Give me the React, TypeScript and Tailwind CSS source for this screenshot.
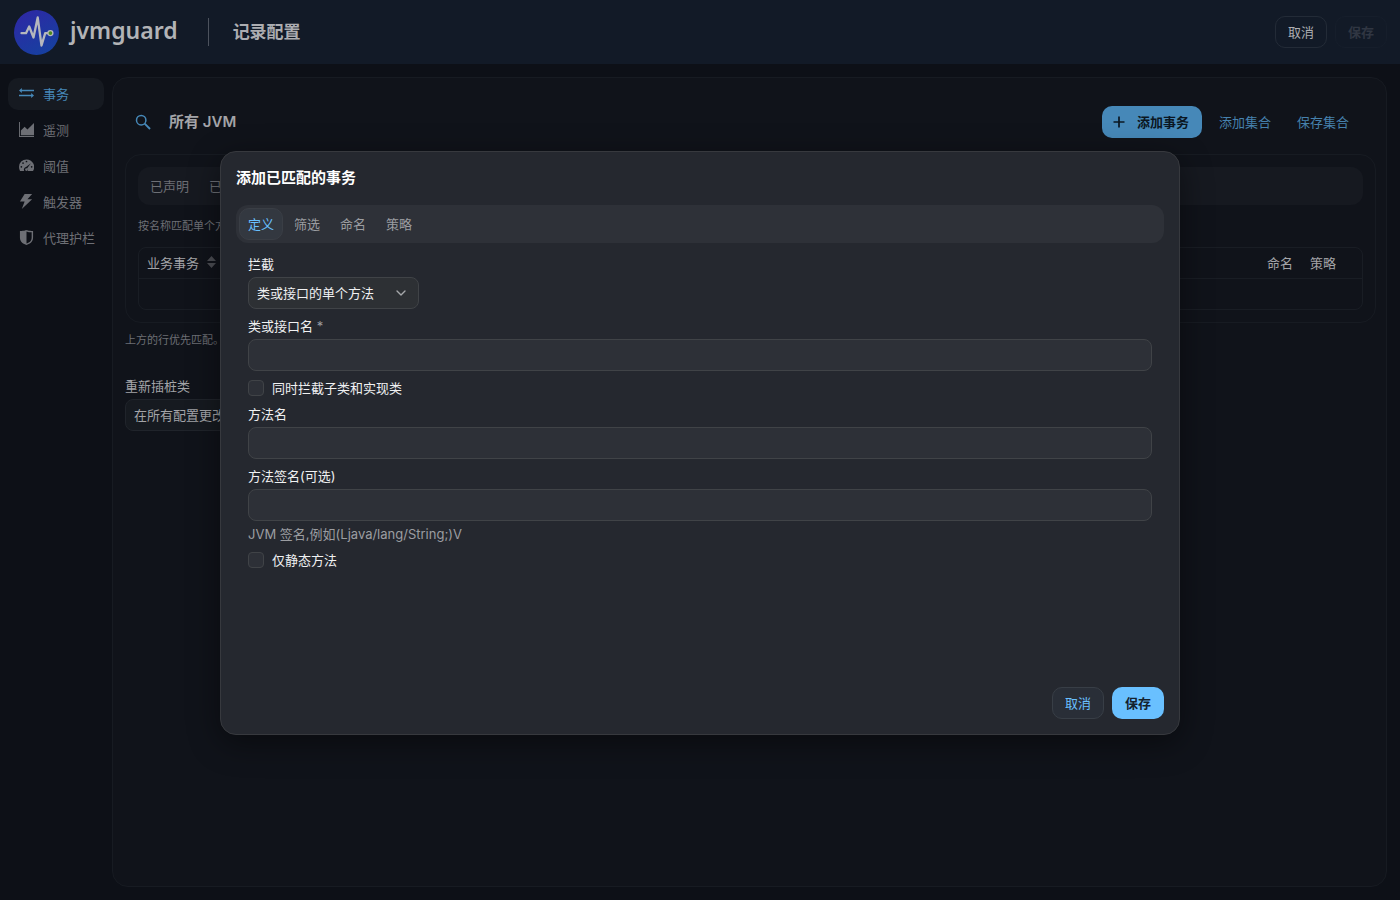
import React from "react";
import { LuChevronDown } from "react-icons/lu";

const font = "font-['Inter','Noto_Sans_CJK_SC',sans-serif]";

const navItems = [
  {
    label: "事务",
    icon: (
      <path d="M3 4V2L0 4.700 3 7.400V5.500h13V4zM13 9.300H0v1.600h13v1.900l3-2.700-3-2.700z" />
    ),
  },
  { label: "遥测", icon: <path d="M1 15V0H0v16h16v-1zM2 14V9l4-4 3 3 7-7v13z" /> },
  {
    label: "阈值",
    icon: (
      <path
        fillRule="evenodd"
        d="M8 1.500a8 8 0 0 0-8 8c0 1.600.400 3 1.100 4.300h4.400a3 3 0 0 1 2-4.200l5.200-4-4 5.200c1 .700 1.300 1.900.700 3h5.500A8 8 0 0 0 8 1.500zM2.500 10.300a.9.9 0 1 1 0-1.800.9.9 0 0 1 0 1.800zM4.300 6.300a.9.9 0 1 1 0-1.800.9.9 0 0 1 0 1.800zM8 4.600a.9.9 0 1 1 0-1.800.9.9 0 0 1 0 1.800zM13.500 10.300a.9.9 0 1 1 0-1.800.9.9 0 0 1 0 1.800zM8 10.800a1.500 1.500 0 1 0 0 3 1.500 1.500 0 0 0 0-3z"
      />
    ),
  },
  { label: "触发器", icon: <path d="M6 0 1 8h5l-3 8L14 5.500H9L14 0z" /> },
  {
    label: "代理护栏",
    icon: (
      <path
        fillRule="evenodd"
        d="M8 0S6 1 1 1v7c0 5 4 7 7 8 3-1 7-3 7-8V1C10 1 8 0 8 0zm0 14.500V1.500c1.500.600 3.500.900 5.500 1V8c0 4-3 5.700-5.500 6.500z"
      />
    ),
  },
];

function Logo() {
  return (
    <svg viewBox="0 0 46 46" className="size-[46px] shrink-0" aria-hidden="true">
      <defs>
        <linearGradient id="disc" x1="0" y1="0" x2="0.6" y2="1">
          <stop offset="0" stopColor="#3026a5" />
          <stop offset="1" stopColor="#173fa0" />
        </linearGradient>
      </defs>
      <circle cx="22.5" cy="23.5" r="22.5" fill="url(#disc)" />
      <path
        d="M7.500 24.200H12L15.200 17.500l4.300 11L23.700 8.500l3.800 28 3.700-12.300h3"
        fill="none"
        stroke="#b5b7bd"
        strokeWidth="2.3"
        strokeLinejoin="round"
        strokeLinecap="round"
      />
      <circle cx="36.400" cy="24.100" r="2.500" fill="#4a8a1e" stroke="#b5b7bd" strokeWidth="1.300" />
    </svg>
  );
}

const labelClass = "h-6 leading-[22px]";
const inputClass = "h-8 w-full rounded-lg border border-[#404347] bg-[#2d3037] px-2 outline-none";

function Field({ id, label, hint, required }: { id: string; label: string; hint?: string; required?: boolean }) {
  return (
    <div className="flex flex-col">
      <label htmlFor={id} className={labelClass}>
        {label}
        {required && <span className="text-[#9b9da1]"> *</span>}
      </label>
      <input id={id} type="text" required={required} className={inputClass} />
      {hint && <p className="h-[22px] leading-[26px] text-[#9b9da1]">{hint}</p>}
    </div>
  );
}

function Check({ id, label }: { id: string; label: string }) {
  return (
    <div className="flex h-5 items-center gap-2 pt-[2px]">
      <input id={id} type="checkbox" className="size-4 appearance-none rounded border border-[#404347] bg-[#2d3037] checked:bg-[#69c0ff]" />
      <label htmlFor={id}>{label}</label>
    </div>
  );
}

function Dialog() {
  return (
    <div role="dialog" aria-modal="true" aria-labelledby="dialog-title" className="flex min-h-[584px] w-full max-w-[960px] flex-col rounded-2xl border border-[#37393e] bg-[#25282f] p-[15px] text-[#f0f1f2] shadow-[0_8px_32px_rgba(0,0,0,0.45)]">
      <h2 id="dialog-title" className="text-[15px] leading-[22px] font-semibold text-white">添加已匹配的事务</h2>
      <div role="tablist" className="mt-4 flex h-[38px] shrink-0 items-center gap-[2px] rounded-xl bg-[#2e3138] px-[3px]">
        <button role="tab" aria-selected="true" className="h-8 rounded-[10px] border border-[#3a3e45] bg-[#333840] px-2 text-[#69c0ff]">定义</button>
        {["筛选", "命名", "策略"].map((t) => (
          <button key={t} role="tab" aria-selected="false" className="h-8 px-[9px] text-[#9b9da1]">{t}</button>
        ))}
      </div>
      <div className="flex flex-col gap-[6px] px-3 pt-[10px]">
        <div className="flex flex-col items-start">
          <label htmlFor="intercept" className={labelClass}>拦截</label>
          <div className="relative">
            <select id="intercept" className="h-8 w-[171px] appearance-none rounded-lg border border-[#404347] bg-[#2d3034] pr-8 pl-2 outline-none">
              <option>类或接口的单个方法</option>
            </select>
            <LuChevronDown className="pointer-events-none absolute top-2 right-[10px] size-4 text-[#a6a8ab]" />
          </div>
        </div>
        <Field id="class-name" label="类或接口名" required />
        <Check id="subclasses" label="同时拦截子类和实现类" />
        <Field id="method-name" label="方法名" />
        <Field id="signature" label="方法签名(可选)" hint="JVM 签名,例如(Ljava/lang/String;)V" />
        <Check id="static-only" label="仅静态方法" />
      </div>
      <div className="mt-auto flex justify-end gap-2">
        <button className="h-8 rounded-[10px] border border-[#383e46] bg-[#292e37] px-3 text-[#69c0ff]">取消</button>
        <button className="h-8 rounded-[10px] bg-[#69c0ff] px-[13px] font-semibold text-[#14222e]">保存</button>
      </div>
    </div>
  );
}

export default function App() {
  return (
    <div className={`${font} relative flex min-h-screen flex-col bg-[#0d1017] text-[13px] leading-5 text-[#a3a4a8]`}>
      <header className="flex h-16 items-center bg-[#121a27] pr-[13px] pl-[14px]">
        <Logo />
        <span className="ml-[10px] pb-1 font-['Noto_Sans',sans-serif] text-[23px] leading-8 font-semibold text-[#b2b3b6]">jvmguard</span>
        <span className="mr-6 ml-[30px] h-7 w-px bg-[#4c525d]" />
        <h1 className="text-[17px] font-semibold text-[#acadb1]">记录配置</h1>
        <div className="ml-auto flex gap-2">
          <button className="h-8 rounded-[10px] border border-[#232b37] px-3 text-[#acadb1]">取消</button>
          <button disabled className="h-8 rounded-[10px] border border-[#161e2b] px-3 font-semibold text-[#303642]">保存</button>
        </div>
      </header>
      <div className="flex flex-1 pr-[13px] pb-[13px]">
        <nav className="flex w-28 shrink-0 flex-col gap-1 px-2 pt-[14px]">
          {navItems.map((n, i) => (
            <a key={n.label} href="#" className={i === 0 ? "flex h-8 items-center gap-[9px] rounded-[10px] bg-[#161a21] pl-[11px] whitespace-nowrap text-[#4688b8]" : "flex h-8 items-center gap-[9px] pl-[11px] whitespace-nowrap text-[#6d6f75]"}>
              <svg viewBox="0 0 16 16" className="mb-px size-[15px] shrink-0 fill-current" aria-hidden="true">{n.icon}</svg>
              {n.label}
            </a>
          ))}
        </nav>
        <main className="mt-[13px] min-w-0 flex-1 rounded-2xl border border-[#171b22] bg-[#10131a] px-3">
          <div className="mt-7 flex h-8 items-center pr-[9px] pl-[10px]">
            <svg viewBox="0 0 16 16" className="size-4 text-[#4688b8]" aria-hidden="true">
              <circle cx="6.200" cy="6.200" r="4.700" fill="none" stroke="currentColor" strokeWidth="1.500" />
              <path d="m9.700 9.700 5.300 5.300" stroke="currentColor" strokeWidth="1.900" />
            </svg>
            <h2 className="ml-[18px] text-[15px] font-semibold">所有 JVM</h2>
            <button className="ml-auto flex h-8 items-center gap-[10px] rounded-[10px] bg-[#4688b8] pr-[13px] pl-[9px] font-semibold text-[#0b1722]">
              <svg viewBox="0 0 16 16" className="size-4" aria-hidden="true">
                <path d="M8 2.500v11M2.500 8h11" stroke="currentColor" strokeWidth="1.700" />
              </svg>
              添加事务
            </button>
            <button className="ml-[17px] text-[#4681ad]">添加集合</button>
            <button className="mr-4 ml-[26px] text-[#4681ad]">保存集合</button>
          </div>
          <section className="mt-4 -mr-[2px] rounded-2xl border border-[#171b22] p-3">
            <div className="flex h-[38px] items-center gap-5 rounded-xl bg-[#161920] px-3 text-[#6d6f75]">
              <span>已声明</span><span>已匹配</span>
            </div>
            <p className="mt-[11px] text-[11px] text-[#6d6f75]">按名称匹配单个方法或类。</p>
            <div className="mt-[11px] rounded-lg border border-[#191d24]">
              <table className="w-full">
                <thead>
                  <tr className="h-[30px] border-b border-[#191d24] text-left">
                    <th className="pl-2 font-normal">
                      <span className="flex items-center gap-2">业务事务
                        <svg viewBox="0 0 8 12" preserveAspectRatio="none" className="mb-[2px] h-3 w-[9px] fill-[#4b4d53]" aria-hidden="true"><path d="M0 5 4 0l4 5zM0 7h8l-4 5z" /></svg>
                      </span>
                    </th>
                    <th className="w-[43px] font-normal">命名</th>
                    <th className="w-[52px] font-normal">策略</th>
                  </tr>
                </thead>
                <tbody><tr className="h-[31px]"><td colSpan={3} /></tr></tbody>
              </table>
            </div>
          </section>
          <p className="mt-[7px] text-[11px] text-[#6d6f75]">上方的行优先匹配。</p>
          <label htmlFor="reinstrument" className="mt-[25px] block h-6 leading-[22px]">重新插桩类</label>
          <select id="reinstrument" className="h-8 w-52 appearance-none rounded-lg border border-[#20242b] bg-[#161a20] px-2">
            <option>在所有配置更改后</option>
          </select>
        </main>
      </div>
      <div className="absolute inset-0 flex items-center justify-center pb-[14px]"><Dialog /></div>
    </div>
  );
}
